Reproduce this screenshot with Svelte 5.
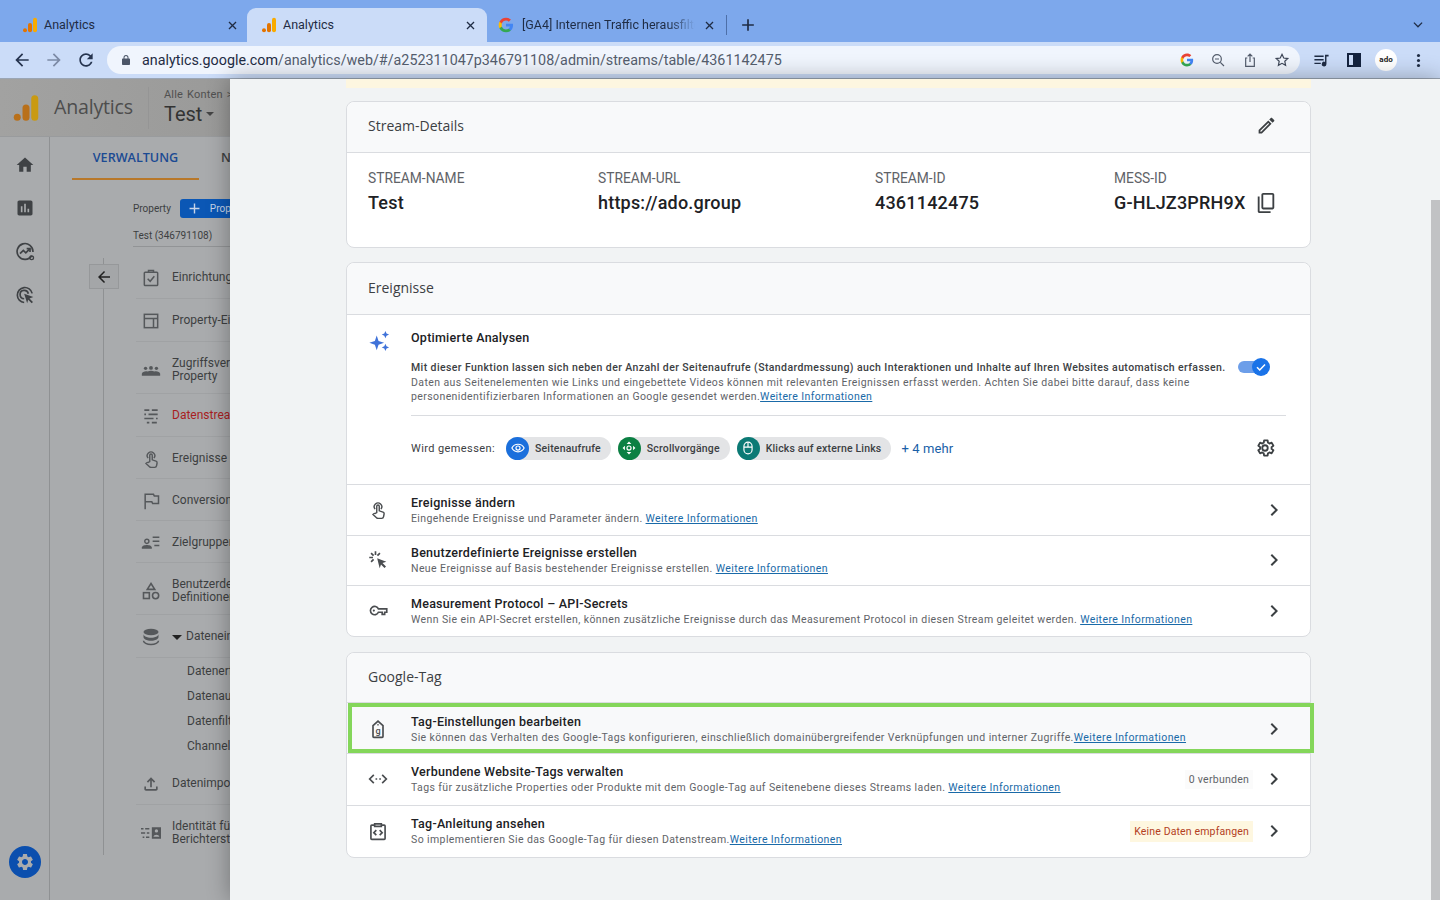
<script>
    // svg bodies on a 24x24 box, shared by both panels
    const icons = {
        home: '<path fill="currentColor" d="M10 20v-6h4v6h5v-8h3L12 3 2 12h3v8z"/>',
        chart: '<path fill="currentColor" d="M19 3H5c-1.1 0-2 .9-2 2v14c0 1.1.9 2 2 2h14c1.1 0 2-.9 2-2V5c0-1.1-.9-2-2-2zM9 17H7v-7h2v7zm4 0h-2V7h2v10zm4 0h-2v-4h2v4z"/>',
        insights: '<g fill="none" stroke="currentColor" stroke-width="2"><path d="M20 16.5A9.5 9.5 0 1 1 21.5 12"/><path d="M6 14l4-4 3 3 5-5"/><path d="M14 8h4v4"/></g><circle cx="20" cy="19" r="2.2" fill="none" stroke="currentColor" stroke-width="1.6"/>',
        target: '<g fill="none" stroke="currentColor" stroke-width="2"><path d="M11 21a9 9 0 1 1 9.6-11"/><path d="M11 16.5a5 5 0 1 1 5-6"/></g><path fill="currentColor" d="M11 10.5l11 4-4.6 1.6 4.2 4.2-1.6 1.6-4.2-4.2L14.6 22z"/>',
        back: '<path fill="currentColor" d="M20 11H7.83l5.59-5.59L12 4l-8 8 8 8 1.41-1.41L7.83 13H20v-2z"/>',
        clipboard: '<g fill="none" stroke="currentColor" stroke-width="1.8"><rect x="4" y="5" width="16" height="16" rx="1"/><path d="M9 5V3h6v2"/><path d="M8 13l3 3 5-6"/></g>',
        layout: '<g fill="none" stroke="currentColor" stroke-width="1.8"><rect x="4" y="4" width="16" height="16"/><path d="M4 9h16M15 9v11"/></g>',
        people: '<path fill="currentColor" d="M1 19v-2.5C1 15 4 13.500 6 13.500c.8 0 1.500.1 2 .3C9 13.300 10.500 13 12 13s3 .3 4 .8c.5-.2 1.200-.3 2-.3 2 0 5 1.500 5 3V19z"/><circle cx="5.500" cy="10" r="2" fill="currentColor"/><circle cx="12" cy="9.500" r="2.300" fill="currentColor"/><circle cx="18.500" cy="10" r="2" fill="currentColor"/>',
        streams: '<path fill="none" stroke="currentColor" stroke-width="2" d="M4 5h6M13 5h7M4 10h2M9 10h11M4 15h11M18 15h2M7 20h3M13 20h6"/>',
        touch: '<g fill="none" stroke="currentColor" stroke-width="1.700"><path d="M8.500 11a4.500 4.500 0 1 1 7 0"/><path d="M10.500 15V7.500a1.500 1.500 0 0 1 3 0V13l4.500 1.500c1 .4 1.500 1.200 1.300 2.300l-.6 3.200c-.2 1.200-1 2-2.200 2h-4.500c-.7 0-1.300-.3-1.800-.8L6 17.500l1-1c.4-.4 1-.5 1.500-.3z"/></g>',
        flag: '<path fill="none" stroke="currentColor" stroke-width="1.800" d="M5 22V4h10l1 2h5v9h-7l-1-2H5"/>',
        audience: '<circle cx="7" cy="10" r="2.500" fill="none" stroke="currentColor" stroke-width="1.700"/><path fill="currentColor" d="M1 19v-1.500C1 15.500 4.500 14.500 7 14.500s6 1 6 3V19z"/><path fill="none" stroke="currentColor" stroke-width="1.800" d="M14 5h8M14 10h8M16 15h6"/>',
        shapes: '<g fill="none" stroke="currentColor" stroke-width="1.900"><path d="M12 3l4.500 7h-9z"/><rect x="3" y="14" width="7" height="7"/><circle cx="17.500" cy="17.500" r="3.700"/></g>',
        database: '<ellipse cx="12" cy="6" rx="9" ry="4" fill="currentColor"/><path fill="currentColor" d="M3 8.500c0 2.500 4 4.500 9 4.500s9-2 9-4.500V12c0 2.500-4 4.500-9 4.500S3 14.500 3 12z"/><path fill="none" stroke="currentColor" stroke-width="1.800" d="M3 16.500c0 2.500 4 4.500 9 4.500s9-2 9-4.500"/>',
        upload: '<path fill="currentColor" d="M18 15v3H6v-3H4v3c0 1.100.9 2 2 2h12c1.100 0 2-.9 2-2v-3zM7 9l1.410 1.410L11 7.830V16h2V7.830l2.590 2.580L17 9l-5-5z"/>',
        identity: '<path fill="none" stroke="currentColor" stroke-width="1.800" d="M0 7h3M5 7h5M0 12h5M7 12h3M2 17h2M6 17h4"/><path fill="currentColor" fill-rule="evenodd" d="M13 5h11v14H13zM18.500 7.500a2 2 0 1 0 0 4 2 2 0 0 0 0-4zM15 16.500h7c0-1.500-2-2.500-3.500-2.500s-3.500 1-3.500 2.500z"/>',
        gear: '<path fill="currentColor" d="M19.140 12.940c.04-.3.06-.61.06-.94 0-.32-.02-.64-.07-.94l2.030-1.580c.18-.14.23-.41.12-.61l-1.920-3.320c-.12-.22-.37-.29-.59-.22l-2.390.96c-.5-.38-1.030-.7-1.620-.94l-.36-2.540c-.04-.24-.24-.41-.48-.41h-3.840c-.24 0-.43.17-.47.41l-.36 2.540c-.59.24-1.130.57-1.620.94l-2.390-.96c-.22-.08-.47 0-.59.22L2.740 8.870c-.12.21-.08.47.12.61l2.030 1.580c-.05.3-.09.63-.09.94s.02.64.07.94l-2.030 1.580c-.18.14-.23.41-.12.61l1.920 3.320c.12.22.37.29.59.22l2.390-.96c.5.38 1.030.7 1.620.94l.36 2.540c.05.24.24.41.48.41h3.840c.24 0 .44-.17.47-.41l.36-2.540c.59-.24 1.130-.56 1.620-.94l2.390.96c.22.08.47 0 .59-.22l1.920-3.320c.12-.22.07-.47-.12-.61l-2.010-1.580zM12 15.600c-1.980 0-3.600-1.620-3.600-3.600s1.620-3.600 3.600-3.600 3.600 1.620 3.600 3.600-1.620 3.600-3.600 3.600z"/>',
        gearOutline: '<path fill="none" stroke="currentColor" stroke-width="2" stroke-linejoin="round" d="M19.140 12.940c.04-.3.06-.61.06-.94 0-.32-.02-.64-.07-.94l2.030-1.580-1.920-3.320-2.390.96c-.5-.38-1.030-.7-1.620-.94l-.36-2.540h-3.840l-.36 2.540c-.59.24-1.130.57-1.620.94l-2.390-.96-1.920 3.320 2.030 1.580c-.05.3-.09.63-.09.94s.02.64.07.94l-2.030 1.580 1.920 3.320 2.390-.96c.5.38 1.030.7 1.620.94l.36 2.540h3.840l.36-2.540c.59-.24 1.130-.56 1.620-.94l2.390.96 1.920-3.320z"/><circle cx="12" cy="12" r="3" fill="none" stroke="currentColor" stroke-width="2"/>',
        edit: '<path fill="currentColor" d="M14.060 9.020l.92.92L5.920 19H5v-.92l9.060-9.060M17.660 3c-.25 0-.51.1-.7.29l-1.830 1.830 3.750 3.750 1.830-1.830c.39-.39.39-1.020 0-1.410l-2.340-2.340c-.2-.2-.45-.29-.71-.29zm-3.600 3.190L3 17.250V21h3.750L17.810 9.940l-3.750-3.750z"/>',
        copy: '<path fill="currentColor" d="M5 5H3v16c0 1.100.9 2 2 2h12v-2H5zM19 1H9c-1.100 0-2 .9-2 2v14c0 1.100.9 2 2 2h10c1.100 0 2-.9 2-2V3c0-1.100-.9-2-2-2zm0 16H9V3h10z"/>',
        chevron: '<path fill="currentColor" d="M10 6L8.590 7.410 13.170 12l-4.580 4.590L10 18l6-6z"/>',
        sparkle: '<path fill="currentColor" d="M9.500 6l2 6 6 2-6 2-2 6-2-6-6-2 6-2zM19 1l1.200 2.800L23 5l-2.800 1.200L19 9l-1.200-2.800L15 5l2.800-1.200zM19 15l1.200 2.800L23 19l-2.800 1.200L19 23l-1.200-2.800L15 19l2.800-1.200z"/>',
        eye: '<path fill="none" stroke="currentColor" stroke-width="2" d="M1.500 12C3.500 8 7.500 5.500 12 5.500S20.500 8 22.500 12c-2 4-6 6.500-10.500 6.500S3.500 16 1.500 12z"/><circle cx="12" cy="12" r="3.500" fill="none" stroke="currentColor" stroke-width="2"/>',
        scroll: '<path fill="currentColor" d="M12 1l4 4H8zM12 23l-4-4h8zM1 12l4-4v8zM23 12l-4 4V8z"/><circle cx="12" cy="12" r="3.500" fill="none" stroke="currentColor" stroke-width="2"/>',
        mouse: '<g fill="none" stroke="currentColor" stroke-width="2"><rect x="5" y="2" width="14" height="20" rx="7"/><path d="M5 10.500h14M12 2v8.500"/></g>',
        click: '<path fill="currentColor" d="M11 10l11 4-4.600 1.600 4.200 4.200-1.800 1.800-4.200-4.200L14 22z"/><path fill="none" stroke="currentColor" stroke-width="2" d="M9 1.500V6M1.500 9H6M3.700 3.700l3 3M14.300 3.700l-3 3M3.700 14.300l3-3"/>',
        key: '<path fill="none" stroke="currentColor" stroke-width="2" d="M12.500 9.500h10v4H20v2.500h-3v-2.500h-4.500a5 5 0 1 1 0-4z"/><circle cx="7" cy="11.500" r="1.300" fill="currentColor"/>',
        tag: '<path fill="none" stroke="currentColor" stroke-width="2" d="M6 8l6-5.500L18 8v13a1 1 0 0 1-1 1H7a1 1 0 0 1-1-1z"/><circle cx="12" cy="7" r="1" fill="currentColor"/><text x="12" y="17.500" font-size="11" font-family="Roboto" font-weight="500" text-anchor="middle" fill="currentColor">g</text>',
        code: '<path fill="none" stroke="currentColor" stroke-width="2" d="M7 7l-5 5 5 5M17 7l5 5-5 5"/><path fill="none" stroke="currentColor" stroke-width="2" stroke-dasharray="2 2.500" d="M9 12h7"/>',
        guide: '<g fill="none" stroke="currentColor" stroke-width="2"><path d="M8 5H4.500a1 1 0 0 0-1 1v15a1 1 0 0 0 1 1h15a1 1 0 0 0 1-1V6a1 1 0 0 0-1-1H16"/><path d="M8 6.500V3.500h8v3z"/><path d="M10 11l-3 3 3 3M14 11l3 3-3 3"/></g>',
        music: '<path fill="currentColor" d="M2 5h13v2H2zM2 10h13v2H2zM2 15h9v2H2z"/><path fill="currentColor" d="M17 4h5v2.500h-3V17a3.300 3.300 0 1 1-2-3z"/>',
        lens: '<circle cx="10.500" cy="10.500" r="6.500" fill="none" stroke="currentColor" stroke-width="1.800"/><path fill="none" stroke="currentColor" stroke-width="1.800" d="M15.500 15.500L21 21M7.500 10.500h6"/>',
        share: '<path fill="none" stroke="currentColor" stroke-width="1.800" d="M8 9H5.500v12.500h13V9H16M12 15V3M8.500 6.500L12 3l3.500 3.500"/>',
        star: '<path fill="none" stroke="currentColor" stroke-width="1.800" d="M12 3.500l2.600 5.600 6.100.7-4.500 4.200 1.200 6L12 17l-5.400 3 1.200-6-4.500-4.200 6.100-.7z"/>',
        close: '<path fill="none" stroke="currentColor" stroke-width="2.400" d="M5.500 5.500l13 13M18.500 5.500l-13 13"/>',
        plus: '<path fill="currentColor" d="M19 13h-6v6h-2v-6H5v-2h6V5h2v6h6z"/>',
        caretDown: '<path fill="none" stroke="currentColor" stroke-width="2.200" d="M5 8l7 7 7-7"/>',
        reload: '<path fill="currentColor" d="M17.650 6.350C16.200 4.900 14.210 4 12 4c-4.420 0-7.990 3.580-7.990 8s3.570 8 7.990 8c3.730 0 6.840-2.550 7.730-6h-2.080c-.82 2.330-3.040 4-5.650 4-3.310 0-6-2.690-6-6s2.690-6 6-6c1.660 0 3.140.69 4.220 1.780L13 11h7V4z"/>',
        lock: '<path fill="currentColor" d="M18 9h-1V7a5 5 0 0 0-10 0v2H6c-1.100 0-2 .9-2 2v9c0 1.100.9 2 2 2h12c1.100 0 2-.9 2-2v-9c0-1.100-.9-2-2-2zM9 7a3 3 0 0 1 6 0v2H9z"/>',
        dots: '<circle cx="12" cy="5" r="2.200" fill="currentColor"/><circle cx="12" cy="12" r="2.200" fill="currentColor"/><circle cx="12" cy="19" r="2.200" fill="currentColor"/>'
    };

    const navItems = [
        { icon: 'clipboard', label: 'Einrichtungsassistent', h: 43 },
        { icon: 'layout', label: 'Property-Einstellungen', h: 43 },
        { icon: 'people', label: 'Zugriffsverwaltung für', label2: 'Property', h: 52 },
        { icon: 'streams', label: 'Datenstreams', h: 43, red: true },
        { icon: 'touch', label: 'Ereignisse', h: 42 },
        { icon: 'flag', label: 'Conversions', h: 42 },
        { icon: 'audience', label: 'Zielgruppen', h: 42 },
        { icon: 'shapes', label: 'Benutzerdefinierte', label2: 'Definitionen', h: 52 },
        { icon: 'database', label: 'Dateneinstellungen', h: 43, caret: true }
    ];
    const subItems = ['Datenerfassung', 'Datenaufbewahrung', 'Datenfilter', 'Channel-Gruppen'];

    const eventRows = [
        { icon: 'touch', title: 'Ereignisse ändern', sub: 'Eingehende Ereignisse und Parameter ändern. ' },
        { icon: 'click', title: 'Benutzerdefinierte Ereignisse erstellen', sub: 'Neue Ereignisse auf Basis bestehender Ereignisse erstellen. ' },
        { icon: 'key', title: 'Measurement Protocol – API-Secrets', sub: 'Wenn Sie ein API-Secret erstellen, können zusätzliche Ereignisse durch das Measurement Protocol in diesen Stream geleitet werden. ' }
    ];
    const tagRows = [
        { icon: 'tag', title: 'Tag-Einstellungen bearbeiten', sub: 'Sie können das Verhalten des Google-Tags konfigurieren, einschließlich domainübergreifender Verknüpfungen und interner Zugriffe.', marked: true },
        { icon: 'code', title: 'Verbundene Website-Tags verwalten', sub: 'Tags für zusätzliche Properties oder Produkte mit dem Google-Tag auf Seitenebene dieses Streams laden. ', note: '0 verbunden' },
        { icon: 'guide', title: 'Tag-Anleitung ansehen', sub: 'So implementieren Sie das Google-Tag für diesen Datenstream.', warn: 'Keine Daten empfangen' }
    ];
    const chips = [
        { icon: 'eye', label: 'Seitenaufrufe', color: '#1a6fdc' },
        { icon: 'scroll', label: 'Scrollvorgänge', color: '#0b8043' },
        { icon: 'mouse', label: 'Klicks auf externe Links', color: '#0b7a75' }
    ];
    const streamInfo = [
        { label: 'STREAM-NAME', value: 'Test', width: 230 },
        { label: 'STREAM-URL', value: 'https://ado.group', width: 277 },
        { label: 'STREAM-ID', value: '4361142475', width: 239 }
    ];
</script>

{#snippet icon(name, size, color)}
    <svg class="icon" width={size} height={size} viewBox="0 0 24 24" style:color={color}>{@html icons[name]}</svg>
{/snippet}

{#snippet gLogo(size)}
    <svg class="icon" width={size} height={size} viewBox="0 0 24 24">
        <path fill="#4285F4" d="M22.560 12.250c0-.78-.07-1.530-.2-2.250H12v4.260h5.920c-.26 1.370-1.040 2.530-2.210 3.310v2.770h3.570c2.080-1.920 3.280-4.740 3.280-8.090z"/>
        <path fill="#34A853" d="M12 23c2.970 0 5.460-.98 7.280-2.660l-3.570-2.770c-.98.66-2.230 1.060-3.710 1.060-2.860 0-5.290-1.930-6.160-4.530H2.180v2.840C3.990 20.530 7.700 23 12 23z"/>
        <path fill="#FBBC05" d="M5.840 14.090c-.22-.66-.35-1.360-.35-2.090s.13-1.430.35-2.090V7.070H2.180C1.430 8.550 1 10.220 1 12s.43 3.450 1.180 4.930l3.660-2.840z"/>
        <path fill="#EA4335" d="M12 5.380c1.620 0 3.060.56 4.210 1.640l3.150-3.150C17.450 2.090 14.970 1 12 1 7.700 1 3.990 3.470 2.180 7.070l3.660 2.840c.87-2.600 3.300-4.530 6.160-4.530z"/>
    </svg>
{/snippet}

{#snippet gaLogo(size, dim)}
    <svg class="icon" width={size} height={size} viewBox="0 0 24 24">
        <rect x="16.500" y="1" width="6" height="22" rx="3" fill={dim ? '#c99a12' : '#f9ab00'}/>
        <rect x="9" y="9" width="6" height="14" rx="3" fill={dim ? '#b9701a' : '#e37400'}/>
        <circle cx="4.500" cy="20" r="3" fill={dim ? '#b9701a' : '#e37400'}/>
    </svg>
{/snippet}

{#snippet learnMore()}
    <a href="#more" class="more">Weitere Informationen</a>
{/snippet}

{#snippet listRow(row)}
    <div class="row" class:marked={row.marked}>
        <div class="row-icon">{@render icon(row.icon, 20, '#4a4d50')}</div>
        <div class="row-text">
            <div class="row-title">{row.title}</div>
            <div class="row-sub">{row.sub}{@render learnMore()}</div>
        </div>
        {#if row.note}<span class="note">{row.note}</span>{/if}
        {#if row.warn}<span class="warn">{row.warn}</span>{/if}
        <div class="chevron">{@render icon('chevron', 24, '#3c4043')}</div>
    </div>
{/snippet}

<div class="browser">
    <div class="tabstrip">
        <div class="tab first-tab">
            {@render gaLogo(16, false)}
            <span class="tab-title">Analytics</span>
            {@render icon('close', 13, '#1f2c44')}
        </div>
        <div class="tab active">
            {@render gaLogo(16, false)}
            <span class="tab-title">Analytics</span>
            {@render icon('close', 13, '#1f2c44')}
        </div>
        <div class="tab last">
            {@render gLogo(16)}
            <span class="tab-title fade">[GA4] Internen Traffic herausfiltern</span>
            {@render icon('close', 13, '#1f2c44')}
        </div>
        <span class="tab-sep"></span>
        <div class="new-tab">{@render icon('plus', 20, '#1f2c44')}</div>
        <div class="tab-list">{@render icon('caretDown', 14, '#1f2c44')}</div>
    </div>

    <div class="toolbar">
        <div class="nav-buttons">
            {@render icon('back', 20, '#26344f')}
            {@render icon('back', 20, '#7c8aa5')}
            {@render icon('reload', 20, '#26344f')}
        </div>
        <div class="omnibox">
            {@render icon('lock', 12, '#4c5668')}
            <span class="url"><b>analytics.google.com</b>/analytics/web/#/a252311047p346791108/admin/streams/table/4361142475</span>
            <div class="omni-actions">
                {@render gLogo(14)}
                {@render icon('lens', 16, '#555e6e')}
                {@render icon('share', 16, '#555e6e')}
                {@render icon('star', 16, '#3d4657')}
            </div>
        </div>
        <div class="extensions">
            {@render icon('music', 17, '#1f2c44')}
            <span class="panel-icon"><i></i></span>
            <span class="avatar">ado</span>
            {@render icon('dots', 17, '#1f2c44')}
        </div>
    </div>

    <div class="page">
        <aside class="behind">
            <header class="ga-header">
                <div class="ga-logo">{@render gaLogo(28, true)}</div>
                <span class="ga-name">Analytics</span>
                <div class="account">
                    <span class="all">Alle Konten &gt;</span>
                    <span class="current">Test <i class="caret"></i></span>
                </div>
            </header>
            <div class="behind-body">
                <nav class="rail">
                    {@render icon('home', 20, '#3f4245')}
                    {@render icon('chart', 20, '#3f4245')}
                    {@render icon('insights', 20, '#3f4245')}
                    {@render icon('target', 20, '#3f4245')}
                    <span class="rail-gear">{@render icon('gear', 20, '#a9abad')}</span>
                </nav>
                <div class="admin">
                    <div class="admin-tabs">
                        <span class="admin-tab">VERWALTUNG</span>
                        <span class="admin-tab other">NUTZER</span>
                    </div>
                    <div class="property">
                        <div class="property-top">
                            <span>Property</span>
                            <span class="create">{@render icon('plus', 17, '#c8d4e8')} Property erstellen</span>
                        </div>
                        <div class="property-name">Test (346791108)</div>
                    </div>
                    <div class="tree">
                        <span class="tree-back">{@render icon('back', 18, '#222')}</span>
                        {#each navItems as item}
                            <div class="tree-item" class:two={item.label2} style:height="{item.h}px">
                                <span class="tree-icon">{@render icon(item.icon, 20, '#55585b')}</span>
                                {#if item.caret}<i class="tree-caret"></i>{/if}
                                <span class="tree-label" class:red={item.red}>{item.label}{#if item.label2}<br />{item.label2}{/if}</span>
                            </div>
                        {/each}
                        <div class="sub-list">
                            {#each subItems as sub}
                                <div class="sub-item">{sub}</div>
                            {/each}
                        </div>
                        <div class="tree-item low" style:height="47px">
                            <span class="tree-icon">{@render icon('upload', 20, '#55585b')}</span>
                            <span class="tree-label">Datenimport</span>
                        </div>
                        <div class="tree-item low last" style:height="50px">
                            <span class="tree-icon">{@render icon('identity', 20, '#55585b')}</span>
                            <span class="tree-label">Identität für die<br />Berichterstellung</span>
                        </div>
                    </div>
                </div>
            </div>
        </aside>

        <main class="drawer">
            <div class="content">
                <div class="warn-strip"></div>

                <section class="card first">
                    <div class="card-head">
                        <span class="head-title">Stream-Details</span>
                        <span class="head-action">{@render icon('edit', 21, '#3c4043')}</span>
                    </div>
                    <div class="stream-info">
                        {#each streamInfo as info}
                            <div class="info" style:width="{info.width}px">
                                <div class="info-label">{info.label}</div>
                                <div class="info-value">{info.value}</div>
                            </div>
                        {/each}
                        <div class="info">
                            <div class="info-label">MESS-ID</div>
                            <div class="info-value with-copy">G-HLJZ3PRH9X {@render icon('copy', 22, '#3c4043')}</div>
                        </div>
                    </div>
                </section>

                <section class="card events">
                    <div class="card-head"><span class="head-title">Ereignisse</span></div>
                    <div class="enhanced">
                        <div class="row-icon top">{@render icon('sparkle', 22, '#3f72d9')}</div>
                        <div class="enhanced-body">
                            <div class="row-title">Optimierte Analysen</div>
                            <div class="enhanced-copy">
                                <div class="copy-text">
                                    <div class="strong">Mit dieser Funktion lassen sich neben der Anzahl der Seitenaufrufe (Standardmessung) auch Interaktionen und Inhalte auf Ihren Websites automatisch erfassen.</div>
                                    <div>Daten aus Seitenelementen wie Links und eingebettete Videos können mit relevanten Ereignissen erfasst werden. Achten Sie dabei bitte darauf, dass keine personenidentifizierbaren Informationen an Google gesendet werden.{@render learnMore()}</div>
                                </div>
                                <div class="toggle"><span class="knob"><svg width="12" height="12" viewBox="0 0 24 24"><path fill="none" stroke="#fff" stroke-width="3" d="M4 12.500l5.500 5.500L20 7"/></svg></span></div>
                            </div>
                            <div class="measured">
                                <span class="measured-label">Wird gemessen:</span>
                                {#each chips as chip}
                                    <span class="chip">
                                        <span class="chip-dot" style:background={chip.color}>{@render icon(chip.icon, 14, '#fff')}</span>
                                        {chip.label}
                                    </span>
                                {/each}
                                <span class="more-chips">+ 4 mehr</span>
                                <span class="measured-gear">{@render icon('gearOutline', 22, '#3c4043')}</span>
                            </div>
                        </div>
                    </div>
                    {#each eventRows as row}
                        {@render listRow(row)}
                    {/each}
                </section>

                <section class="card tags">
                    <div class="card-head"><span class="head-title">Google-Tag</span></div>
                    {#each tagRows as row}
                        {@render listRow(row)}
                    {/each}
                </section>
            </div>
            <div class="scrollbar"><div class="thumb"></div></div>
        </main>
    </div>
</div>

<style>
    :global(body) {
        margin: 0;
        overflow: hidden;
        font-family: Roboto, "Liberation Sans", sans-serif;
    }

    .browser {
        width: 1440px;
        height: 900px;
        display: flex;
        flex-direction: column;
        overflow: hidden;
    }

    .icon {
        display: block;
        flex: none;
    }

    /* browser chrome */
    .tabstrip {
        height: 42px;
        flex: none;
        display: flex;
        align-items: flex-end;
        background: #7da8ec;
        box-sizing: border-box;
        padding-left: 8px;
    }

    .tab {
        width: 239px;
        height: 34px;
        box-sizing: border-box;
        display: flex;
        align-items: center;
        gap: 6px;
        padding: 0 10px 0 14px;
        font-size: 12.5px;
        color: #1f2c44;
        border-radius: 9px 9px 0 0;
    }

    .tab.first-tab {
        padding-right: 8px;
    }

    .tab.active {
        background: #cbdcf8;
        width: 240px;
    }

    .tab.last {
        padding: 0 10px 0 11px;
        gap: 8px;
    }

    .tab-title {
        flex: 1;
        white-space: nowrap;
        overflow: hidden;
        padding-bottom: 2px;
    }

    .tab-title.fade {
        -webkit-mask-image: linear-gradient(to right, #000 85%, transparent);
        mask-image: linear-gradient(to right, #000 85%, transparent);
    }

    .tab-sep {
        width: 1px;
        height: 20px;
        margin: 0 0 7px 0;
        background: #4d6fa8;
    }

    .new-tab {
        margin: 0 0 7px 11px;
    }

    .tab-list {
        margin: 0 15px 10px auto;
    }

    .toolbar {
        height: 37px;
        flex: none;
        box-sizing: border-box;
        display: flex;
        align-items: center;
        background: #cbdcf8;
        border-bottom: 1px solid #9ba6b5;
    }

    .nav-buttons {
        width: 107px;
        box-sizing: border-box;
        display: flex;
        gap: 12px;
        padding-left: 12px;
    }

    .nav-buttons :global(.icon:nth-child(2)) {
        transform: scaleX(-1);
    }

    .omnibox {
        width: 1193px;
        height: 28px;
        box-sizing: border-box;
        display: flex;
        align-items: center;
        padding: 0 10px 0 13px;
        background: #f0f5fd;
        border-radius: 14px;
    }

    .url {
        margin-left: 10px;
        font-size: 14.320px;
        color: #555e6e;
        white-space: nowrap;
    }

    .url b {
        font-weight: 400;
        color: #1f2c44;
    }

    .omni-actions {
        margin-left: auto;
        display: flex;
        align-items: center;
        gap: 16px;
    }

    .extensions {
        flex: 1;
        display: flex;
        align-items: center;
        padding: 0 13px;
    }

    .panel-icon {
        width: 14px;
        height: 14px;
        margin-left: 17px;
        box-sizing: border-box;
        border: 2px solid #14233f;
        display: flex;
        justify-content: flex-end;
    }

    .panel-icon i {
        width: 6px;
        background: #14233f;
    }

    .avatar {
        width: 22px;
        height: 22px;
        margin-left: 14px;
        margin-right: auto;
        border-radius: 50%;
        background: #fff;
        color: #222;
        font-size: 8px;
        font-weight: 700;
        line-height: 22px;
        text-align: center;
    }

    .page {
        flex: 1;
        display: flex;
        min-height: 0;
    }

    /* dimmed app behind the drawer */
    .behind {
        width: 230px;
        flex: none;
        display: flex;
        flex-direction: column;
        overflow: hidden;
        background: #a9abad;
        color: #3d3f41;
    }

    .ga-header {
        height: 58px;
        flex: none;
        box-sizing: border-box;
        display: flex;
        align-items: center;
        padding-left: 12px;
        background: linear-gradient(to right, #a2a2a1, #9a9a99);
        border-bottom: 1px solid #999b9d;
    }

    .ga-name {
        margin-left: 14px;
        padding-bottom: 2px;
        font-family: "Open Sans", sans-serif;
        font-size: 19.600px;
        letter-spacing: -0.2px;
        color: #4d4d4d;
    }

    .account {
        margin-left: 15px;
        padding-left: 15px;
        height: 42px;
        display: flex;
        flex-direction: column;
        border-left: 1px solid #959595;
        white-space: nowrap;
    }

    .all {
        font-size: 11px;
        line-height: 16px;
        letter-spacing: 0.2px;
        word-spacing: 1px;
        color: #505050;
    }

    .current {
        display: flex;
        align-items: center;
        gap: 4px;
        font-size: 20px;
        line-height: 23px;
        color: #333;
    }

    .caret {
        border: 4px solid transparent;
        border-top-color: #444;
        border-bottom: 0;
    }

    .behind-body {
        flex: 1;
        display: flex;
        min-height: 0;
    }

    .rail {
        width: 50px;
        flex: none;
        box-sizing: border-box;
        display: flex;
        flex-direction: column;
        align-items: center;
        gap: 23.400px;
        padding-top: 18px;
        border-right: 1px solid #8f9193;
    }

    .rail-gear {
        margin-top: auto;
        margin-bottom: 22px;
        width: 32px;
        height: 32px;
        border-radius: 50%;
        background: #0b4fae;
        display: flex;
        align-items: center;
        justify-content: center;
    }

    .admin {
        flex: 1;
        min-width: 0;
    }

    .admin-tabs {
        height: 43px;
        display: flex;
        align-items: center;
        padding-left: 22px;
        white-space: nowrap;
        font-family: "Open Sans", sans-serif;
        font-size: 12.600px;
        font-weight: 600;
    }

    .admin-tab {
        width: 127px;
        flex: none;
        box-sizing: border-box;
        height: 43px;
        line-height: 41px;
        text-align: center;
        color: #1b4a93;
        border-bottom: 2px solid #b8782a;
    }

    .admin-tab.other {
        width: auto;
        margin-left: 22px;
        color: #3d3f41;
        border: 0;
    }

    .property {
        margin-left: 83px;
        padding-top: 19px;
        font-size: 10px;
        white-space: nowrap;
    }

    .property-top {
        display: flex;
        align-items: center;
        gap: 9px;
        height: 19px;
    }

    .create {
        display: flex;
        align-items: center;
        gap: 7px;
        height: 19px;
        padding: 0 8px 0 6px;
        border-radius: 3px;
        background: #0b57b5;
        color: #c8d4e8;
    }

    .property-name {
        height: 28px;
        line-height: 35px;
        border-bottom: 1px solid #929496;
    }

    .tree {
        position: relative;
        margin-left: 53px;
        margin-top: 9px;
        box-sizing: border-box;
        padding-left: 33px;
        font-size: 12px;
        height: 599px;
    }

    .tree::before {
        content: '';
        position: absolute;
        left: 0;
        top: 2px;
        bottom: 0;
        border-left: 1px solid #8f9193;
    }

    .tree-back {
        position: absolute;
        left: -14px;
        top: 8px;
        width: 28px;
        height: 23px;
        display: flex;
        align-items: center;
        justify-content: center;
        background: #a4a6a8;
        border: 1px solid #96989a;
    }

    .tree-item {
        box-sizing: border-box;
        display: flex;
        align-items: center;
        white-space: nowrap;
        border-bottom: 1px solid #a0a2a4;
        padding: 2px 0 0 5px;
    }

    .tree-item.two {
        padding-top: 5px;
    }

    .tree-item.low {
        padding-top: 6px;
    }

    .tree-item.last {
        border-bottom: 0;
    }

    .tree-icon {
        width: 20px;
        flex: none;
        margin-right: 11px;
    }

    .tree-label {
        line-height: 13.500px;
    }

    .tree-label.red {
        color: #a81e22;
    }

    .tree-caret {
        border: 5px solid transparent;
        border-top-color: #222;
        border-bottom: 0;
        margin-right: 4px;
    }

    .sub-list {
        padding-left: 51px;
        white-space: nowrap;
    }

    .sub-item {
        height: 25px;
        line-height: 26px;
    }

    /* drawer */
    .drawer {
        flex: 1;
        min-width: 0;
        position: relative;
        background: #f1f3f4;
        box-shadow: 0 0 22px rgba(0, 0, 0, 0.32);
        display: flex;
    }

    .content {
        margin-left: 116px;
        width: 965px;
    }

    .warn-strip {
        height: 9px;
        background: #fdf6e0;
    }

    .card {
        background: #fff;
        border: 1px solid #dadce0;
        border-radius: 8px;
        box-sizing: border-box;
    }

    .card.first {
        margin-top: 13px;
        height: 147px;
    }

    .card.events {
        margin-top: 14px;
        height: 375px;
    }

    .card.tags {
        margin-top: 15px;
        height: 206px;
    }

    .card-head {
        height: 51px;
        box-sizing: border-box;
        display: flex;
        align-items: center;
        justify-content: space-between;
        padding: 0 33px 0 21px;
        font-family: "Open Sans", sans-serif;
        font-size: 14px;
        color: #3c4043;
        background: #f8f9fa;
        border-bottom: 1px solid #dadce0;
        border-radius: 8px 8px 0 0;
    }

    .events .card-head {
        height: 52px;
    }

    .tags .card-head {
        height: 50px;
    }

    .head-title,
    .head-action {
        padding-bottom: 3px;
    }

    .stream-info {
        display: flex;
        padding: 17px 0 0 21px;
    }

    .info-label {
        font-size: 13.800px;
        line-height: 16px;
        color: #5f6368;
    }

    .info-value {
        margin-top: 6px;
        font-size: 18px;
        line-height: 22px;
        font-weight: 500;
        letter-spacing: 0.2px;
        color: #202124;
    }

    .with-copy {
        display: flex;
        align-items: center;
        gap: 9px;
    }

    .enhanced {
        height: 170px;
        box-sizing: border-box;
        display: flex;
        padding: 15px 24px 0 21px;
        border-bottom: 1px solid #dadce0;
    }

    .row-icon {
        width: 43px;
        flex: none;
    }

    .enhanced-body {
        flex: 1;
    }

    .row-title {
        font-size: 12.500px;
        line-height: 15px;
        font-weight: 500;
        letter-spacing: 0.25px;
        color: #202124;
    }

    .enhanced-copy {
        display: flex;
        margin-top: 16px;
        padding-bottom: 10px;
        border-bottom: 1px solid #dadce0;
    }

    .copy-text {
        width: 825px;
        flex: none;
        font-size: 10.500px;
        line-height: 14.500px;
        letter-spacing: 0.4px;
        color: #5f6368;
    }

    .strong {
        font-weight: 500;
        color: #3c4043;
    }

    .toggle {
        position: relative;
        margin: 0 0 0 2px;
        width: 24px;
        height: 12px;
        border-radius: 6px;
        background: #6c9ee9;
    }

    .knob {
        position: absolute;
        right: -8px;
        top: -3px;
        width: 18px;
        height: 18px;
        border-radius: 50%;
        background: #1a73e8;
        display: flex;
        align-items: center;
        justify-content: center;
    }

    .measured {
        display: flex;
        align-items: center;
        margin-top: 21px;
        height: 23px;
    }

    .measured-label {
        font-size: 11px;
        letter-spacing: 0.4px;
        color: #3c4043;
        margin-right: 11px;
    }

    .chip {
        height: 23px;
        display: flex;
        align-items: center;
        gap: 6px;
        padding-right: 10px;
        margin-right: 7px;
        border-radius: 12px;
        background: #e3e4e6;
        font-size: 10.500px;
        font-weight: 500;
        letter-spacing: 0.17px;
        color: #3c4043;
    }

    .chip-dot {
        width: 23px;
        height: 23px;
        border-radius: 50%;
        display: flex;
        align-items: center;
        justify-content: center;
    }

    .more-chips {
        margin-left: 3px;
        font-size: 13px;
        letter-spacing: 0.1px;
        color: #1a5fa8;
    }

    .measured-gear {
        margin-left: auto;
        margin-right: 10px;
    }

    .row {
        position: relative;
        box-sizing: border-box;
        height: 50.500px;
        display: flex;
        align-items: center;
        padding: 0 24px 0 21px;
        border-bottom: 1px solid #dadce0;
    }

    .tags .row {
        height: 51.300px;
    }

    .row:last-child {
        border-bottom: 0;
    }

    /* the green box drawn on top of the screenshot */
    .row.marked {
        background: #f8f9fa;
        padding-top: 1px;
    }

    .row.marked::after {
        content: '';
        position: absolute;
        left: 1px;
        right: -4px;
        top: 0;
        bottom: 0;
        border: 4px solid #84d65a;
    }

    .row-text {
        flex: 1;
        min-width: 0;
        padding-top: 1px;
    }

    .row-sub {
        margin-top: 2px;
        font-size: 10.500px;
        line-height: 14px;
        letter-spacing: 0.4px;
        color: #5f6368;
        white-space: nowrap;
    }

    .more {
        color: #1a6aa8;
        text-decoration: underline;
    }

    .note {
        padding: 3px 4px;
        font-size: 10.500px;
        letter-spacing: 0.25px;
        color: #5f6368;
        background: #fbfbfb;
    }

    .warn {
        padding: 4px 4px;
        font-size: 10.500px;
        letter-spacing: 0.15px;
        color: #b3401e;
        background: #fef7e0;
    }

    .chevron {
        width: 24px;
        margin-left: 9px;
    }

    .scrollbar {
        margin-left: auto;
        width: 9px;
        padding-top: 121px;
        box-sizing: border-box;
    }

    .thumb {
        height: 700px;
        background: #c1c2c4;
    }
</style>
